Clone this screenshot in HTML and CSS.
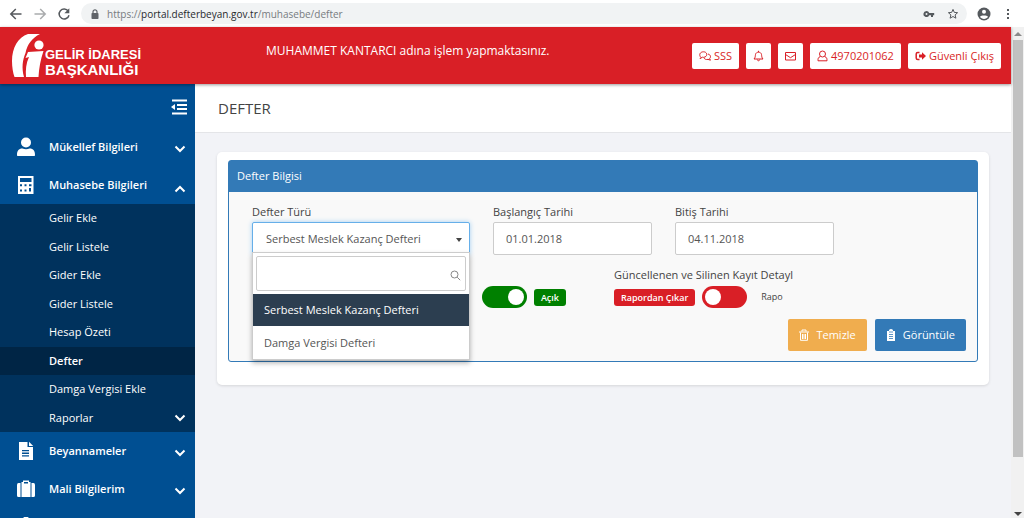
FILE: index.html
```html
<!DOCTYPE html>
<html lang="tr">
<head>
<meta charset="utf-8">
<title>Defter</title>
<link rel="stylesheet" href="styles.css">
</head>
<body>
<div class="browser-bar">
  <button class="nav-btn" aria-label="Geri"><svg width="14" height="14" viewBox="0 0 14 14"><path d="M12.5 7H2M6.8 2L1.8 7l5 5" /></svg></button>
  <button class="nav-btn nav-off" aria-label="İleri"><svg width="14" height="14" viewBox="0 0 14 14"><path d="M1.5 7H12M7.2 2l5 5-5 5" /></svg></button>
  <button class="nav-btn" aria-label="Yenile"><svg width="14" height="14" viewBox="0 0 14 14"><path d="M11.2 4A5 5 0 1 0 12 8.2" /><path class="solid" d="M12.3 1.3v5H7.4z" /></svg></button>
  <div class="address">
    <svg width="8" height="10" viewBox="0 0 8 10"><path d="M2 4V2.8a2 2 0 0 1 4 0V4" fill="none" stroke="#5f6368" stroke-width="1.2"/><rect x=".5" y="4" width="7" height="6" rx=".8" fill="#5f6368"/></svg>
    <span class="url">https://<b>portal.defterbeyan.gov.tr</b>/muhasebe/defter</span>
    <svg width="12" height="8" viewBox="0 0 12 8"><path fill="#55595d" fill-rule="evenodd" d="M3.5 1a3 3 0 1 0 2.7 4.2H8V7h2V5.200h1.200V3H6.200A3 3 0 0 0 3.500 1zm0 2a1 1 0 1 1 0 2 1 1 0 0 1 0-2z"/></svg>
    <svg width="12" height="12" viewBox="0 0 12 12"><path fill="none" stroke="#55595d" d="M6 1.400l1.300 3 3.300.3-2.500 2.200.8 3.300L6 8.500l-2.900 1.700.8-3.300-2.500-2.200 3.300-.3z"/></svg>
  </div>
  <button class="nav-btn profile" aria-label="Profil"><svg width="14" height="14" viewBox="0 0 14 14"><circle class="solid" cx="7" cy="7" r="6.500"/><circle class="cut" cx="7" cy="4.800" r="2"/><path class="cut" d="M3 9.800c1-1.800 7-1.800 8 0-1.600 2.800-6.400 2.800-8 0z"/></svg></button>
  <button class="nav-btn" aria-label="Menü"><svg width="4" height="12" viewBox="0 0 4 12"><path class="solid" d="M1 1h2v2H1zM1 5h2v2H1zM1 9h2v2H1z"/></svg></button>
</div>
<div class="viewport">
  <div class="app">
    <header class="header">
      <a class="logo" href="#">
        <svg width="33" height="43" viewBox="0 0 33 43"><path fill="#fff" d="M28 0H16C6 3 0 14 0 27c0 6 1 12 2.500 16H12C9.500 34 10.500 26 13.500 19 15.500 10 20 4 28 0z"/><circle cx="27" cy="11" r="4.600" fill="#fff"/><path fill="#fff" d="M16 18l15.500-1C28.500 26 27 34 26.500 43H14c-.5-7 0-14 3-20l-3.500 1z"/></svg>
        <span class="logo-text"><span>GELİR İDARESİ</span><span class="logo-large">BAŞKANLIĞI</span></span>
      </a>
      <p class="notice">MUHAMMET KANTARCI adına işlem yapmaktasınız.</p>
      <nav class="actions">
        <a class="action" href="#"><svg width="12" height="12" viewBox="0 0 12 12"><path d="M2 7.500C-.5 5 1 1.800 4.500 1.800S9 5.500 6 7c-1 .5-1.800.4-2.500.2L1 8.600zM9 4c3 .8 3 3.500 1.500 4.700l1 1.500-2.500-.8c-2 .4-3.500-.2-4-1.500"/></svg>SSS</a>
        <a class="action" href="#" aria-label="Bildirimler"><svg width="11" height="12" viewBox="0 0 11 12"><path d="M1 9h9C8.500 7.500 8.800 6 8.500 4.500 8 1.400 3 1.400 2.500 4.500 2.200 6 2.500 7.500 1 9zM5.500.8v1.400M4.300 9.500c.2 1.700 2.200 1.700 2.400 0"/></svg></a>
        <a class="action" href="#" aria-label="Mesajlar"><svg width="11" height="12" viewBox="0 0 11 12"><path d="M.5 2.500h10v7.500H.5zM.5 4.500l5 3.200 5-3.200"/></svg></a>
        <a class="action" href="#"><svg width="11" height="12" viewBox="0 0 11 12"><circle cx="5.500" cy="4" r="3"/><path d="M3.300 6.500C1 7.500 1 8.500 1 10.800h9C10 8.500 10 7.500 7.700 6.500"/></svg>4970201062</a>
        <a class="action" href="#"><svg width="11" height="12" viewBox="0 0 11 12"><path stroke-width="1.500" d="M4.500 2.500H2.800C1.500 2.500 1.200 3 1.200 4v4c0 1 .3 1.500 1.600 1.500h1.700"/><path class="arrow" d="M4 4.600h3V2.200L11 6 7 9.800V7.400H4z"/></svg>Güvenli Çıkış</a>
      </nav>
    </header>
    <div class="columns">
      <aside class="sidebar">
        <button class="collapse" aria-label="Menüyü daralt"><svg width="17" height="16" viewBox="0 0 17 16"><path fill="none" stroke="#fff" stroke-width="2" d="M1 1.500h15M6 6h10M6 10h10M1 14.500h15"/><path fill="#fff" d="M0 8l4-3v6z"/></svg></button>
        <nav>
          <a class="menu" href="#"><svg class="menu-icon" width="18" height="20" viewBox="0 0 18 20"><circle cx="9" cy="5.500" r="5"/><path d="M1 19c-.7 0-1-.3-1-1 0-4 1.500-6.500 5.500-6.500 2 1 5 1 7 0 4 0 5.500 2.500 5.500 6.500 0 .7-.3 1-1 1z"/></svg><span>Mükellef Bilgileri</span><svg class="chev" width="12" height="8" viewBox="0 0 12 8"><path d="M1.500 1.500L6 6l4.500-4.500"/></svg></a>
          <a class="menu" href="#"><svg class="menu-icon" width="18" height="20" viewBox="0 0 18 20"><path fill-rule="evenodd" d="M1 1h15.500v18H1zM3 3v4h11.500V3zM3 9.200v2h2v-2zm4.500 0v2h2v-2zm4.500 0v2h2.500v-2zM3 14.500v2h2v-2zm4.500 0v2h2v-2zm4.500-1.500v3.500h2V13z"/></svg><span>Muhasebe Bilgileri</span><svg class="chev chev-up" width="12" height="8" viewBox="0 0 12 8"><path d="M1.500 6.500L6 2l4.500 4.500"/></svg></a>
          <div class="submenu">
            <a href="#">Gelir Ekle</a>
            <a href="#">Gelir Listele</a>
            <a href="#">Gider Ekle</a>
            <a href="#">Gider Listele</a>
            <a href="#">Hesap Özeti</a>
            <a class="current" href="#">Defter</a>
            <a href="#">Damga Vergisi Ekle</a>
            <a href="#"><span>Raporlar</span><svg class="chev chev-sub" width="12" height="8" viewBox="0 0 12 8"><path d="M1.500 1.500L6 6l4.500-4.500"/></svg></a>
          </div>
          <a class="menu" href="#"><svg class="menu-icon" width="18" height="20" viewBox="0 0 18 20"><path fill-rule="evenodd" d="M2 1h8.500v5H16v13H2zM12 .8L16.200 5H12zM5 9v1.300h7V9zm0 2.600v1.300h7v-1.300zm0 2.600v1.300h7v-1.300z"/></svg><span>Beyannameler</span><svg class="chev" width="12" height="8" viewBox="0 0 12 8"><path d="M1.500 1.500L6 6l4.500-4.500"/></svg></a>
          <a class="menu" href="#"><svg class="menu-icon" width="18" height="20" viewBox="0 0 18 20"><path fill-rule="evenodd" d="M4.500 3H6V1.500h6V3h1.500v15h-9zM7 3h4v1.500H7zM0 6q0-2 1.500-2h2v14h-2Q0 18 0 16.500zM14.500 4h2Q18 4 18 6v10.500q0 1.500-1.500 1.500h-2z"/></svg><span>Mali Bilgilerim</span><svg class="chev" width="12" height="8" viewBox="0 0 12 8"><path d="M1.500 1.500L6 6l4.500-4.500"/></svg></a>
          <a class="menu" href="#" aria-label="Ayarlar"><svg class="menu-icon" width="18" height="20" viewBox="0 0 18 20"><path d="M6 1q3-3 6 0l1 5h5v10H0V6h5z"/></svg></a>
        </nav>
      </aside>
      <main class="main">
        <h1 class="title">DEFTER</h1>
        <section class="card">
          <form class="panel">
            <h2 class="panel-head">Defter Bilgisi</h2>
            <div class="panel-body">
              <div class="fields">
                <div class="field picker">
                  <label for="tur">Defter Türü</label>
                  <select id="tur" class="control open"><option>Serbest Meslek Kazanç Defteri</option><option>Damga Vergisi Defteri</option></select>
                  <svg class="caret" width="6" height="4" viewBox="0 0 6 4"><path d="M0 0h6L3 4z"/></svg>
                  <div class="dropdown">
                    <div class="search">
                      <input type="text" aria-label="Ara">
                      <svg class="lens" width="11" height="11" viewBox="0 0 11 11"><circle cx="4.500" cy="4.500" r="3.500"/><path d="M7.200 7.200l3 3"/></svg>
                    </div>
                    <button type="button" class="option chosen">Serbest Meslek Kazanç Defteri</button>
                    <button type="button" class="option">Damga Vergisi Defteri</button>
                  </div>
                </div>
                <div class="field"><label for="bas">Başlangıç Tarihi</label><input id="bas" class="control" type="text" value="01.01.2018"></div>
                <div class="field"><label for="bit">Bitiş Tarihi</label><input id="bit" class="control" type="text" value="04.11.2018"></div>
              </div>
              <div class="switches">
                <div class="switch-row end">
                  <input class="switch" type="checkbox" id="acik" checked>
                  <label class="badge green" for="acik">Açık</label>
                </div>
                <div class="switch-group">
                  <span class="switch-title">Güncellenen ve Silinen Kayıt Detayl</span>
                  <div class="switch-row">
                    <label class="badge" for="rapor">Rapordan Çıkar</label>
                    <input class="switch" type="checkbox" id="rapor">
                    <span class="off-text">Rapo</span>
                  </div>
                </div>
              </div>
              <div class="buttons">
                <button type="button" class="btn amber"><svg width="10" height="12" viewBox="0 0 10 12"><path fill="none" stroke="#fff" d="M0 3h10M3 2.500V1h4v1.500M1.500 3.500v7.800h7V3.500M3.500 5v5M5 5v5M6.500 5v5"/></svg>Temizle</button>
                <button type="button" class="btn blue"><svg width="10" height="12" viewBox="0 0 10 12"><path fill="#fff" d="M1 2h2V1q2-2 4 0v1h2v10H1z"/><path stroke="#337ab7" stroke-width=".8" d="M3 3h4M3 5.500h4M3 7.500h4M3 9.500h4"/></svg>Görüntüle</button>
              </div>
            </div>
          </form>
        </section>
      </main>
    </div>
  </div>
  <div class="scrollbar">
    <svg width="8" height="4" viewBox="0 0 8 4"><path fill="#8a8a8a" d="M0 4l4-4 4 4z"/></svg>
    <div class="track"><div class="thumb"></div></div>
    <svg width="8" height="4" viewBox="0 0 8 4"><path fill="#444" d="M0 0l4 4 4-4z"/></svg>
  </div>
</div>
</body>
</html>
```

FILE: styles.css
```css
* { box-sizing: border-box; }
body {
  margin: 0;
  height: 100vh;
  display: flex;
  flex-direction: column;
  overflow: hidden;
  font: 11px/16px "Open Sans", sans-serif;
  color: #444;
}
a { color: inherit; text-decoration: none; }
button, input, select { font: inherit; color: inherit; }
svg { flex: none; }

.browser-bar {
  display: flex;
  align-items: center;
  gap: 10px;
  height: 27px;
  flex: none;
  padding: 0 14px 0 9px;
  background: #fff;
}
.nav-btn { display: flex; padding: 0; border: 0; background: none; }
.nav-btn path { fill: none; stroke: #55595d; stroke-width: 1.5; }
.nav-btn .solid { fill: #55595d; stroke: none; }
.nav-btn .cut { fill: #fff; stroke: none; }
.nav-off { opacity: .5; }
.profile { margin: 0 5px 0 0; }
.address {
  flex: 1;
  display: flex;
  align-items: center;
  gap: 12px;
  height: 21px;
  padding: 0 8px 0 10px;
  border-radius: 11px;
  background: #f1f3f4;
}
.url { flex: 1; margin-left: -4px; font-size: 10px; color: #777b80; }
.url b { font-weight: 400; color: #27292c; }

.viewport { flex: 1; min-height: 0; display: flex; }
.app { flex: 1; min-width: 0; display: flex; flex-direction: column; }
.header {
  display: flex;
  align-items: center;
  flex: none;
  height: 57px;
  padding: 0 10px 0 12px;
  background: #d91f26;
  color: #fff;
  box-shadow: 0 1px 3px rgba(0, 0, 0, .4);
  z-index: 1;
}
.logo { display: flex; align-items: flex-end; width: 254px; }
.logo-text {
  display: flex;
  flex-direction: column;
  font: bold 13px/15px "Liberation Sans", sans-serif;
}
.logo-large { font-size: 15px; }
.notice { flex: 1; margin: 0; padding-bottom: 10px; font-size: 12px; font-weight: 500; }
.actions { display: flex; gap: 7px; }
.action {
  display: flex;
  align-items: center;
  gap: 3px;
  height: 26px;
  padding: 0 7px;
  border-radius: 2px;
  background: #fff;
  color: #d91f26;
  font-weight: 500;
}
.action path, .action circle { fill: none; stroke: #d91f26; }
.action .arrow { fill: #d91f26; stroke: none; }

.columns { flex: 1; min-height: 0; display: flex; }
.sidebar { width: 195px; flex: none; overflow: hidden; background: #004f92; color: #fff; }
.collapse {
  display: flex;
  justify-content: flex-end;
  width: 100%;
  height: 44px;
  padding: 15px 7px 0 0;
  border: 0;
  background: none;
}
.menu { display: flex; align-items: center; height: 38px; padding: 0 9px 0 17px; font-weight: 600; }
.menu span { flex: 1; margin-left: 14px; }
.menu-icon { fill: #fff; }
.chev { margin-top: 4px; }
.chev-up { margin-top: 8px; }
.chev-sub { margin-top: 0; }
.chev path { fill: none; stroke: #fff; stroke-width: 2; }
.submenu { display: grid; grid-auto-rows: 1fr; height: 228px; background: #00325d; }
.submenu a { display: flex; align-items: center; justify-content: space-between; padding: 0 9px 0 49px; }
.submenu .current { background: #002545; font-weight: 600; }

.main { flex: 1; min-width: 0; background: #f2f3f7; }
.title {
  margin: 0;
  padding: 16px 23px;
  border-bottom: 1px solid #e4e5e8;
  background: #fff;
  font-size: 15px;
  line-height: 16px;
  font-weight: 400;
}
.card {
  margin: 19px 22px;
  padding: 8px 11px 23px;
  border-radius: 5px;
  background: #fff;
  box-shadow: 0 1px 3px rgba(0, 0, 0, .12);
}
.panel { border: 1px solid #337ab7; border-radius: 3px; background: #f9f9f9; }
.panel-head {
  margin: 0;
  padding: 7px 8px 8px;
  background: #337ab7;
  color: #fff;
  font-size: 11px;
  line-height: 16px;
  font-weight: 500;
}
.panel-body { padding: 12px 11px 10px 23px; }
.fields { display: grid; grid-template-columns: 218fr 159fr 159fr 109fr; gap: 23px; }
.field { display: flex; flex-direction: column; gap: 2px; min-width: 0; }
.picker { position: relative; }
.control {
  width: 100%;
  height: 33px;
  padding: 0 12px;
  border: 1px solid #ccc;
  border-radius: 2px;
  background: #fff;
  color: #555;
  appearance: none;
}
.open { padding: 0 13px; border-color: #66afe9; box-shadow: 0 0 5px #a5d0f2; }
.caret { position: absolute; right: 8px; top: 34px; fill: #444; }
.dropdown {
  position: absolute;
  top: 48px;
  left: 0;
  right: 0;
  z-index: 2;
  border: 1px solid #ccc;
  background: #fff;
  box-shadow: 0 3px 5px rgba(0, 0, 0, .3);
}
.search { position: relative; padding: 3px 3px 3px; }
.search input { display: block; width: 100%; height: 35px; border: 1px solid #ccc; border-radius: 2px; }
.lens { position: absolute; right: 8px; top: 17px; fill: none; stroke: #888; }
.option {
  display: block;
  width: 100%;
  height: 33px;
  padding: 0 11px;
  border: 0;
  background: none;
  text-align: left;
  color: #555;
}
.chosen { height: 32px; background: #2c3e50; color: #fff; font-weight: 500; }

.switches {
  display: grid;
  grid-template-columns: 314fr 170fr 134fr;
  column-gap: 48px;
  align-items: end;
  margin: 12px 0 11px;
}
.switch-group { display: flex; flex-direction: column; gap: 3px; min-width: 0; }
.switch-title { white-space: nowrap; }
.switch-row { display: flex; align-items: center; gap: 7px; height: 22px; white-space: nowrap; }
.end { justify-content: flex-end; }
.switch {
  appearance: none;
  display: flex;
  flex: none;
  width: 45px;
  height: 22px;
  margin: 0;
  padding: 3px;
  border-radius: 11px;
  background: #d91f26;
}
.switch::before { content: ""; width: 16px; height: 16px; border-radius: 50%; background: #fff; }
.switch:checked { background: #008000; justify-content: flex-end; }
.badge {
  padding: 0 7px;
  border-radius: 3px;
  background: #d91f26;
  color: #fff;
  font-size: 9px;
  line-height: 17px;
  font-weight: 600;
}
.green { background: #008000; }
.off-text { margin-left: 7px; font-size: 9px; }
.buttons { display: flex; justify-content: flex-end; gap: 8px; }
.btn {
  display: flex;
  align-items: center;
  gap: 7px;
  height: 32px;
  padding: 0 11px;
  border: 0;
  border-radius: 2px;
  color: #fff;
  font-weight: 500;
}
.amber { background: #f0ad4e; }
.blue { background: #337ab7; }

.scrollbar {
  display: flex;
  flex-direction: column;
  align-items: center;
  gap: 4px;
  width: 13px;
  flex: none;
  padding: 5px 0 2px;
  background: #f1f1f1;
}
.track { flex: 1; align-self: stretch; padding: 0 1px 0 2px; }
.thumb { height: 89%; background: #c1c1c1; }
```
